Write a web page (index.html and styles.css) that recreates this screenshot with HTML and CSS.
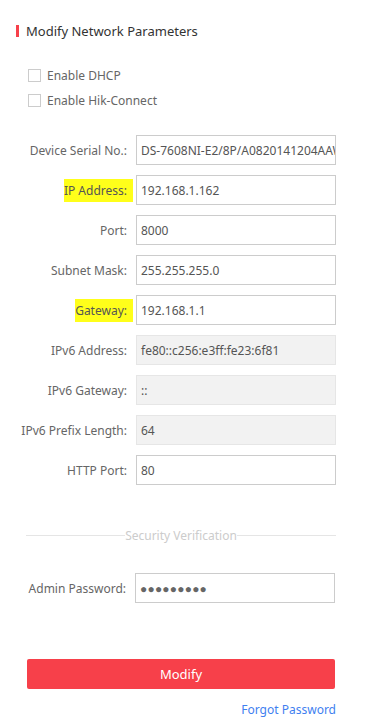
FILE: index.html
```html
<!DOCTYPE html>
<html lang="en">
<head>
    <meta charset="UTF-8">
    <meta name="viewport" content="width=device-width, initial-scale=1.0">
    <title>Modify Network Parameters</title>
    <link rel="stylesheet" href="styles.css">
</head>
<body>
    <div class="page">
        <div class="title">Modify Network Parameters</div>

        <div class="checks">
            <label class="check"><span class="box"></span>Enable DHCP</label>
            <label class="check"><span class="box"></span>Enable Hik-Connect</label>
        </div>

        <div class="form">
            <div class="row">
                <span class="label">Device Serial No.:</span>
                <div class="field">DS-7608NI-E2/8P/A0820141204AAWR</div>
            </div>
            <div class="row">
                <span class="label"><span class="mark">IP Address:</span></span>
                <div class="field">192.168.1.162</div>
            </div>
            <div class="row">
                <span class="label">Port:</span>
                <div class="field">8000</div>
            </div>
            <div class="row">
                <span class="label">Subnet Mask:</span>
                <div class="field">255.255.255.0</div>
            </div>
            <div class="row">
                <span class="label"><span class="mark">Gateway:</span></span>
                <div class="field">192.168.1.1</div>
            </div>
            <div class="row">
                <span class="label">IPv6 Address:</span>
                <div class="field disabled">fe80::c256:e3ff:fe23:6f81</div>
            </div>
            <div class="row">
                <span class="label">IPv6 Gateway:</span>
                <div class="field disabled">::</div>
            </div>
            <div class="row">
                <span class="label">IPv6 Prefix Length:</span>
                <div class="field disabled">64</div>
            </div>
            <div class="row">
                <span class="label">HTTP Port:</span>
                <div class="field">80</div>
            </div>
        </div>

        <div class="divider"><span>Security Verification</span></div>

        <div class="row admin">
            <span class="label">Admin Password:</span>
            <div class="field dots">&#9679;&#9679;&#9679;&#9679;&#9679;&#9679;&#9679;&#9679;&#9679;</div>
        </div>

        <button class="modify">Modify</button>
        <div class="links">
            <a href="#" class="forgot">Forgot Password</a>
        </div>
    </div>
</body>
</html>
```

FILE: styles.css
```css
body {
    margin: 0;
    padding: 0;
    background-color: #fff;
    font-family: "Noto Sans", "Open Sans", sans-serif;
    font-size: 12px;
    color: #666;
}

.page {
    width: 366px;
    padding: 22px 30px 0 16px;
    box-sizing: border-box;
}

.title {
    display: flex;
    align-items: center;
    font-size: 13px;
    color: #333;
    line-height: 18px;
}

.title::before {
    content: "";
    width: 3px;
    height: 12px;
    background-color: #f7404a;
    margin-right: 7px;
}

.checks {
    margin-top: 23px;
    padding-left: 12px;
}

.check {
    display: flex;
    align-items: center;
    height: 25px;
    color: #666;
}

.box {
    width: 11px;
    height: 11px;
    border: 1px solid #ccc;
    margin-right: 6px;
}

.form {
    margin-top: 22px;
}

.row {
    display: flex;
    align-items: center;
    margin-bottom: 10px;
}

.label {
    width: 111px;
    text-align: right;
    padding-right: 9px;
    white-space: nowrap;
    flex-shrink: 0;
}

.mark {
    background-color: #ffff1a;
    color: #555;
    padding: 3px 6px 3px 0;
    margin-right: -6px;
}

.field {
    width: 200px;
    height: 30px;
    box-sizing: border-box;
    border: 1px solid #ccc;
    padding: 0 4px;
    line-height: 30px;
    font-size: 12px;
    color: #555;
    white-space: nowrap;
    overflow: hidden;
}

.field.disabled {
    background-color: #f2f2f2;
    border-color: #e6e6e6;
}

.divider {
    display: flex;
    align-items: center;
    margin: 42px 0 0 10px;
    color: #ccc;
}

.divider::before,
.divider::after {
    content: "";
    flex: 1;
    height: 1px;
    background-color: #e5e5e5;
}

.admin {
    margin-top: 29px;
}

.admin .label {
    width: 110px;
}

.dots {
    font-size: 12px;
    letter-spacing: 0.2px;
    color: #666;
}

.modify {
    display: block;
    width: 308px;
    height: 30px;
    margin: 56px 0 0 11px;
    border: none;
    border-radius: 2px;
    background-color: #f7404a;
    color: #fff;
    font-family: inherit;
    font-size: 13px;
    cursor: pointer;
}

.links {
    text-align: right;
    margin-top: 12px;
}

.forgot {
    color: #3f7ff0;
    text-decoration: none;
    font-size: 12px;
}
```
